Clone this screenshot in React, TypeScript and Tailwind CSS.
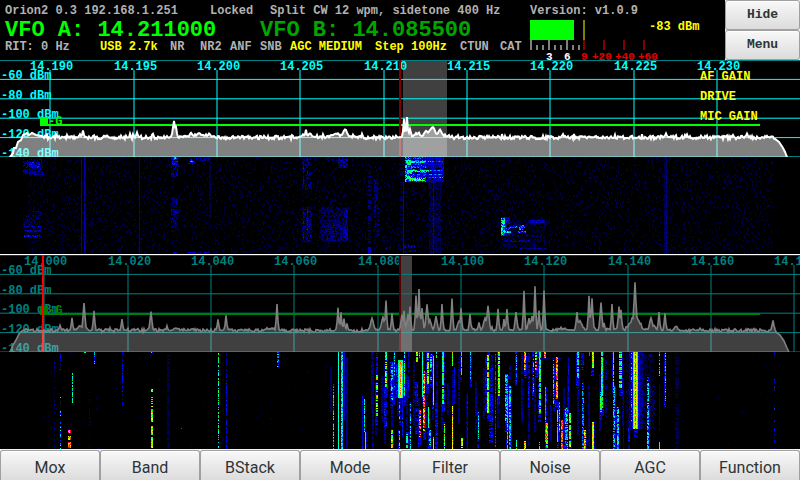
import React from "react";

type Point = [number, number];
/** x, width, top, bottom, weakest level, strongest level, share of rows that carry signal */
type Streak = [number, number, number, number, number, number, number];

const SPAN = 800;
const PLOT = 97;
const MONO = "font-['Liberation_Mono',monospace] font-bold";

function randomFrom(seed: number) {
  let s = seed;
  return () => {
    s = (s * 1664525 + 1013904223) % 4294967296;
    return s / 4294967296;
  };
}

/* ---------- spectrum ---------- */

function tracePoints(seed: number, base: number, left: Point[], right: Point[], peaks: [number, number, number][]) {
  const rnd = randomFrom(seed);
  const start = left[left.length - 1][0] + 1;
  const end = right[0][0];
  const pts: Point[] = [...left];
  for (let x = start; x < end; x += 1) {
    let y = base + (rnd() - 0.5) * 3.6 - (rnd() > 0.94 ? 2 : 0);
    for (const [px, py, w] of peaks) {
      const d = Math.abs(x - px);
      if (d < w * 4) {
        const lift = (base - py) * Math.exp(-Math.pow(d / w, 1.7));
        y = Math.min(y, base - lift + (rnd() - 0.5) * (w > 3 ? 3 : 1));
      }
    }
    pts.push([x, y]);
  }
  return [...pts, ...right];
}

const toPath = (pts: Point[]) => pts.map(([x, y], i) => `${i ? "L" : "M"}${x} ${y.toFixed(1)}`).join("");

const TRACE_1 = tracePoints(
  7, 77.5,
  [[10, 97], [13, 93], [14, 88], [16, 88], [18, 82], [21, 80], [23, 75], [27, 73], [29, 75], [32, 73], [36, 75], [42, 76]],
  [[775, 79], [779, 82], [783, 88], [785, 92], [787, 97]],
  [[80, 74, 1], [83, 70, 1], [174, 61, 1.5], [176, 67, 1], [137, 73, 1], [191, 73, 2], [200, 74, 5], [209, 74, 2], [303, 74, 1.5],
   [306, 70, 1], [310, 73, 2], [336, 74, 5], [345, 69, 3], [404, 59, 1], [407, 57, 1], [410, 69, 1.5], [418, 73, 4], [426, 71, 3],
   [432, 67, 4], [440, 70, 3], [563, 74, 1], [666, 73, 1], [747, 74, 1]],
);

const TRACE_2 = tracePoints(
  21, 75.5,
  [[10, 97], [13, 90], [16, 85], [19, 79], [22, 76], [26, 74]],
  [[776, 77], [780, 80], [784, 86], [787, 93], [789, 97]],
  [[60, 70, 1], [72, 63, 1], [84, 48, 1.3], [94, 56, 1], [80, 71, 3], [122, 64, 1], [151, 57, 1.3], [167, 71, 1], [176, 73, 3],
   [218, 64, 1], [226, 60, 1], [270, 73, 4], [277, 49, 1], [338, 53, 1], [341, 57, 1], [344, 64, 1], [347, 69, 1], [372, 63, 2],
   [383, 62, 2], [386, 45, 1], [392, 58, 1], [402, 60, 1.5], [404, 56, 1], [408, 59, 1.5], [410, 52, 1], [416, 41, 1],
   [419, 34, 1], [422, 53, 1.3], [427, 49, 1.5], [430, 65, 2], [436, 61, 1.5], [442, 49, 1], [452, 44, 1], [459, 66, 2],
   [461, 53, 1], [470, 59, 1], [479, 67, 1], [485, 63, 2], [488, 51, 1.5], [498, 54, 1], [504, 64, 1], [507, 54, 1],
   [516, 57, 1.3], [524, 36, 1], [529, 63, 1.5], [532, 61, 1.5], [535, 31, 1], [539, 56, 1], [544, 36, 1], [562, 73, 4],
   [577, 57, 1.2], [580, 66, 3], [589, 41, 1], [592, 43, 1.2], [601, 48, 1.3], [604, 68, 1], [612, 49, 1], [619, 52, 1.3],
   [621, 55, 1], [635, 27, 1.4], [635, 60, 6], [651, 63, 2], [654, 70, 2], [659, 57, 1], [665, 58, 1], [676, 71, 2],
   [773, 65, 1.2], [700, 73, 1]],
);

/* ---------- waterfall ---------- */

function levelColour(l: number) {
  const c = (a: number, b: number) => Math.round(255 * Math.min(1, Math.max(0, (l - a) / (b - a))));
  if (l < 0.34) return `rgb(0,0,${c(0, 0.34)})`;
  if (l < 0.5) return `rgb(0,${c(0.34, 0.5)},255)`;
  if (l < 0.65) return `rgb(0,255,${255 - c(0.5, 0.65)})`;
  if (l < 0.8) return `rgb(${c(0.65, 0.8)},255,0)`;
  if (l < 0.94) return `rgb(255,${255 - c(0.8, 0.94)},0)`;
  return `rgb(255,0,${c(0.94, 1)})`;
}

function waterfallLayers(seed: number, specks: number, streaks: Streak[]) {
  const rnd = randomFrom(seed);
  const grid = new Map<number, number>();
  const put = (x: number, y: number, level: number) => {
    if (y < 0 || y >= PLOT) return;
    grid.set(y * SPAN + x, level);
  };
  for (let i = 0; i < specks; i += 1) {
    const x = Math.floor(28 + rnd() * 745);
    const y = Math.floor(rnd() * PLOT);
    const level = 0.03 + rnd() * 0.09;
    put(x, y, level);
    put(x, y + 1, level);
  }
  for (const [x, w, top, bottom, low, high, duty] of streaks) {
    for (let y = top; y < bottom; y += 1) {
      const rowOn = w <= 4 ? rnd() < duty : true;
      for (let dx = 0; dx < w; dx += 1) {
        if (rowOn && (w <= 4 || rnd() < duty)) put(x + dx, y, low + rnd() * (high - low));
      }
    }
  }
  const layers = new Map<number, string[]>();
  grid.forEach((level, key) => {
    const step = Math.round(level * 30);
    const x = key % SPAN;
    const y = Math.floor(key / SPAN);
    if (!layers.has(step)) layers.set(step, []);
    layers.get(step)!.push(`M${x} ${y}h1v1h-1z`);
  });
  return [...layers].map(([step, d]) => ({ step, fill: levelColour(step / 30), d: d.join("") }));
}

const speech: Streak[] = [
  [405, 39, 0, 25, 0.14, 0.34, 0.9],
  [406, 20, 0, 25, 0.28, 0.44, 0.6],
  [405, 2, 0, 25, 0.32, 0.56, 0.9],
  ...[4, 13, 17, 20].map((y): Streak => [428, 15, y, y + 1, 0.3, 0.48, 0.9]),
  ...[2, 8, 11, 16].map((y): Streak => [411, 32, y, y + 1, 0.02, 0.1, 0.7]),
  [407, 19, 4, 6, 0.42, 0.66, 0.85],
  [407, 22, 13, 15, 0.42, 0.68, 0.8],
  [407, 5, 13, 17, 0.5, 0.74, 0.7],
  [407, 4, 3, 8, 0.5, 0.7, 0.7],
  [407, 5, 19, 22, 0.5, 0.76, 0.8],
  [409, 16, 21, 24, 0.5, 0.8, 0.7],
];

const WATERFALL_1 = waterfallLayers(3, 6500, [
  [81, 1, 0, 97, 0.18, 0.24, 1], [84, 2, 0, 97, 0.18, 0.24, 0.95], [139, 1, 0, 97, 0.15, 0.22, 1], [209, 2, 0, 60, 0.06, 0.14, 0.7],
  [23, 20, 2, 18, 0.1, 0.28, 0.5], [27, 13, 5, 11, 0.2, 0.38, 0.7], [23, 18, 54, 82, 0.08, 0.2, 0.4],
  [24, 18, 69, 70, 0.2, 0.34, 0.8], [25, 16, 73, 75, 0.2, 0.34, 0.7], [24, 17, 78, 80, 0.2, 0.38, 0.8],
  [171, 7, 0, 20, 0.12, 0.32, 0.5], [172, 6, 0, 8, 0.2, 0.4, 0.7], [174, 2, 0, 2, 0.4, 0.5, 1],
  [171, 7, 40, 75, 0.08, 0.28, 0.4], [188, 7, 2, 7, 0.2, 0.38, 0.6], [190, 3, 4, 5, 0.38, 0.5, 1],
  [196, 14, 1, 4, 0.12, 0.3, 0.6], [188, 22, 95, 97, 0.15, 0.34, 0.8], [173, 4, 94, 97, 0.2, 0.34, 0.8],
  [302, 9, 0, 33, 0.1, 0.26, 0.4], [303, 1, 0, 28, 0.2, 0.36, 0.6], [307, 1, 0, 20, 0.2, 0.36, 0.5],
  [325, 23, 0, 4, 0.08, 0.24, 0.5], [338, 10, 2, 11, 0.14, 0.32, 0.7],
  [302, 10, 50, 85, 0.08, 0.28, 0.45], [303, 1, 52, 82, 0.2, 0.38, 0.6], [307, 1, 50, 80, 0.2, 0.38, 0.6],
  [319, 29, 50, 84, 0.07, 0.19, 0.6], [326, 22, 68, 84, 0.12, 0.26, 0.4], [343, 5, 52, 82, 0.14, 0.32, 0.5],
  [368, 3, 14, 86, 0.08, 0.22, 0.4], [374, 5, 22, 80, 0.08, 0.24, 0.4], [368, 3, 90, 97, 0.2, 0.34, 0.7],
  [385, 6, 90, 93, 0.12, 0.28, 0.5], [400, 4, 0, 97, 0.04, 0.12, 0.6], [403, 1, 25, 97, 0.2, 0.26, 1],
  [429, 12, 25, 97, 0.05, 0.17, 0.7], [433, 1, 25, 97, 0.14, 0.3, 0.9],
  ...speech,
  [404, 12, 88, 91, 0.14, 0.32, 0.7], [404, 12, 93, 95, 0.14, 0.3, 0.6],
  [501, 44, 62, 92, 0.04, 0.14, 0.4], [501, 9, 60, 79, 0.15, 0.4, 0.7], [501, 4, 60, 78, 0.32, 0.6, 0.75],
  [502, 3, 63, 67, 0.5, 0.7, 0.9], [505, 6, 74, 76, 0.38, 0.55, 0.8], [510, 15, 69, 71, 0.28, 0.46, 0.9],
  [519, 5, 68, 73, 0.24, 0.46, 0.8], [518, 8, 74, 76, 0.24, 0.46, 0.8], [529, 16, 63, 66, 0.16, 0.32, 0.8],
  [504, 26, 83, 85, 0.14, 0.3, 0.7], [520, 26, 91, 92, 0.14, 0.3, 0.7], [512, 32, 78, 79, 0.12, 0.28, 0.6],
  [664, 3, 0, 97, 0.05, 0.15, 0.9], [666, 1, 0, 97, 0.12, 0.22, 0.9],
]);

const DIM = [0.08, 0.24] as const;
const BLUE = [0.16, 0.38] as const;
const CYAN = [0.3, 0.56] as const;
const GREEN = [0.45, 0.7] as const;
const YELLOW = [0.56, 0.86] as const;
const RED = [0.76, 1] as const;

const s = (x: number, w: number, top: number, bottom: number, k: readonly [number, number], duty = 0.9): Streak =>
  [x, w, top, bottom, k[0], k[1], duty];

const haze: Streak[] = [371, 375, 381, 384, 391, 397, 406, 413, 418, 426, 432, 436, 441, 447, 452, 458, 466, 475, 483, 491,
  497, 505, 509, 521, 528, 534, 539, 550, 563, 567, 577, 582, 588, 599, 605, 614, 622, 630].map((x, i) =>
  s(x, 2, (i * 37) % 50, 60 + ((i * 23) % 37), DIM, 0.85));

const signals: Streak[] = [
  s(54, 1, 10, 97, DIM, 0.4), s(60, 1, 1, 18, BLUE, 0.5), s(60, 1, 43, 97, CYAN, 0.55), s(72, 1, 21, 51, GREEN, 0.7),
  s(84, 2, 0, 1, GREEN, 1), s(94, 1, 0, 12, CYAN, 0.7), s(68, 3, 78, 81, RED, 1), s(68, 3, 84, 88, RED, 1),
  s(68, 3, 90, 96, RED, 0.9), s(89, 1, 40, 97, DIM, 0.3), s(122, 1, 0, 53, BLUE, 0.7), s(151, 2, 0, 1, CYAN, 1),
  s(151, 2, 37, 55, YELLOW, 0.6), s(151, 2, 57, 70, YELLOW, 0.95), s(151, 2, 74, 83, YELLOW, 0.9), s(151, 2, 85, 96, YELLOW, 1),
  s(167, 3, 3, 97, [0.04, 0.14], 0.8), s(181, 1, 76, 77, CYAN, 1), s(218, 1, 1, 97, GREEN, 0.65), s(226, 1, 1, 97, BLUE, 0.75),
  s(277, 2, 0, 15, CYAN, 0.7), s(330, 2, 15, 60, [0.08, 0.2]), s(333, 1, 32, 97, CYAN, 0.9), s(338, 1, 0, 97, [0.48, 0.58], 1),
  s(341, 2, 0, 97, [0.38, 0.56], 1), s(344, 1, 0, 68, [0.2, 0.28], 1), s(346, 2, 5, 97, [0.14, 0.22], 1),
  s(362, 1, 44, 97, [0.2, 0.36], 1), s(364, 1, 47, 80, [0.4, 0.7], 0.95), s(365, 1, 80, 97, GREEN), s(372, 2, 0, 97, DIM, 0.8),
  s(376, 2, 0, 22, BLUE, 0.7), s(376, 2, 22, 65, YELLOW, 0.65), s(385, 2, 0, 35, [0.4, 0.8], 0.8), s(384, 3, 35, 75, BLUE, 0.7),
  s(391, 2, 10, 48, CYAN, 0.75), s(391, 2, 78, 97, YELLOW, 0.9), s(394, 1, 0, 45, CYAN, 0.7),
  s(393, 16, 24, 46, [0.12, 0.32], 0.9), s(396, 9, 12, 46, [0.22, 0.4], 0.9), s(398, 5, 8, 46, [0.46, 0.62], 1),
  s(399, 3, 14, 46, [0.7, 0.84], 1), s(400, 1, 10, 44, [0.8, 0.92], 1), s(399, 1, 50, 68, CYAN, 0.8), s(399, 1, 78, 97, CYAN, 0.8),
  s(402, 1, 46, 85, [0.2, 0.4]), s(404, 1, 0, 45, GREEN, 0.8), s(408, 1, 0, 40, BLUE, 0.9), s(410, 1, 50, 97, CYAN, 0.8),
  s(406, 2, 80, 97, GREEN, 0.7), s(415, 3, 30, 82, BLUE, 0.75), s(416, 2, 0, 12, YELLOW, 0.7), s(419, 2, 57, 85, RED, 0.75),
  s(419, 1, 0, 6, RED), s(422, 1, 0, 45, [0.46, 0.6], 0.95), s(424, 1, 19, 40, RED), s(423, 2, 22, 80, RED, 0.85),
  s(427, 2, 0, 33, YELLOW, 0.7), s(428, 1, 55, 76, [0.5, 0.64], 1), s(429, 2, 78, 97, CYAN, 0.8), s(430, 2, 2, 28, CYAN, 0.7),
  s(433, 1, 4, 53, [0.82, 0.88], 1), s(433, 1, 85, 97, [0.8, 0.88], 1), s(435, 3, 50, 97, BLUE, 0.8), s(436, 1, 0, 6, GREEN),
  s(442, 2, 0, 52, [0.44, 0.7], 0.9), s(444, 1, 70, 97, YELLOW), s(452, 1, 0, 14, YELLOW), s(452, 1, 54, 97, [0.74, 0.88], 0.95),
  s(454, 1, 15, 52, BLUE), s(461, 1, 0, 23, GREEN), s(461, 2, 86, 97, YELLOW), s(467, 1, 42, 97, BLUE), s(470, 1, 0, 28, CYAN),
  s(478, 1, 60, 88, CYAN, 0.7), s(487, 2, 0, 61, YELLOW, 0.85), s(485, 2, 5, 60, BLUE, 0.8), s(489, 4, 15, 92, BLUE, 0.7),
  s(495, 1, 2, 95, [0.28, 0.42]), s(498, 2, 0, 44, YELLOW, 0.8), s(505, 3, 22, 72, CYAN, 0.8), s(507, 1, 40, 97, [0.4, 0.55]),
  s(509, 2, 34, 97, [0.36, 0.6], 0.8), s(516, 1, 0, 26, CYAN), s(516, 1, 88, 97, GREEN),
  s(524, 2, 0, 19, RED, 0.9), s(524, 2, 89, 97, RED, 1), s(528, 2, 0, 55, BLUE, 0.8), s(533, 1, 0, 40, CYAN, 0.6),
  s(535, 2, 0, 18, [0.6, 1], 0.8), s(539, 2, 0, 62, [0.4, 0.74], 0.85), s(539, 1, 90, 97, GREEN), s(544, 2, 0, 6, RED, 1),
  s(540, 22, 6, 7, [0.16, 0.3], 0.9),
  s(545, 1, 35, 90, [0.86, 0.96], 0.95), s(546, 2, 70, 96, [0.6, 0.95], 0.9), s(553, 1, 8, 52, CYAN, 0.85), s(556, 2, 5, 48, RED, 0.95),
  s(557, 1, 58, 90, GREEN, 0.9), s(559, 1, 50, 80, RED, 0.9), s(561, 2, 68, 97, [0.82, 1], 0.9), s(565, 3, 55, 97, CYAN, 0.7),
  s(568, 1, 5, 62, BLUE, 0.95), s(569, 2, 60, 97, YELLOW, 0.8), s(577, 2, 0, 28, [0.38, 0.7], 0.8), s(581, 3, 0, 18, BLUE, 0.8),
  s(582, 2, 30, 97, [0.24, 0.48], 0.85), s(584, 2, 78, 97, RED, 0.9), s(589, 1, 0, 4, RED), s(589, 1, 32, 97, DIM),
  s(592, 2, 0, 16, YELLOW, 1), s(592, 2, 70, 97, [0.68, 0.86], 1), s(600, 2, 40, 60, GREEN, 0.8),
  s(601, 2, 0, 56, [0.42, 0.66], 0.95), s(613, 1, 0, 34, [0.56, 0.74]), s(613, 2, 34, 97, CYAN, 0.8),
  s(617, 2, 55, 97, [0.36, 0.6], 0.9), s(619, 3, 0, 36, [0.42, 0.76], 0.8), s(623, 1, 30, 97, DIM),
  s(626, 28, 2, 77, [0.03, 0.12], 0.6), s(629, 14, 0, 77, [0.1, 0.26], 0.85), s(631, 1, 0, 70, CYAN, 0.6),
  s(632, 7, 0, 77, [0.24, 0.36], 1), s(633, 5, 0, 77, [0.46, 0.66], 1), s(634, 3, 0, 77, [0.7, 0.84], 1),
  s(635, 1, 0, 77, [0.78, 1], 1), s(628, 2, 68, 97, BLUE, 0.8), s(647, 1, 91, 97, YELLOW), s(647, 2, 25, 97, CYAN, 0.8),
  s(649, 6, 34, 77, DIM, 0.4), s(649, 3, 0, 5, DIM, 0.7),
  s(659, 1, 0, 24, [0.26, 0.6]), s(659, 1, 90, 97, GREEN), s(659, 1, 30, 80, DIM, 0.8), s(665, 1, 0, 49, CYAN, 0.85),
  s(675, 4, 0, 97, [0.03, 0.14], 0.6), s(774, 1, 0, 6, BLUE, 0.8), s(774, 1, 27, 40, BLUE, 0.6), s(774, 1, 53, 58, BLUE, 0.7),
  s(774, 1, 66, 97, BLUE, 0.4),
];

const skirts = signals
  .filter(([x, w, top, bottom, low]) => x > 364 && x < 666 && w < 4 && bottom - top > 14 && low >= 0.3)
  .map(([x, w, top, bottom], i) => s(x - (i % 2), w + 1, top, Math.min(97, bottom + 8), BLUE, 0.75));

const WATERFALL_2 = waterfallLayers(11, 160, [...haze, ...skirts, ...signals]);

/* ---------- receiver panels ---------- */

type ReceiverProps = {
  name: string;
  active: boolean;
  marks: [number, string][];
  passband: [number, number];
  agcY: number;
  trace: Point[];
  waterfall: { step: number; fill: string; d: string }[];
  bandEdge?: number;
  gains?: string[];
};

const pct = (x: number) => `${(x / SPAN) * 100}%`;

function Receiver({ name, active, marks, passband, agcY, trace, waterfall, bandEdge, gains = [] }: ReceiverProps) {
  const ink = active ? "#00ffff" : "#008080";
  const green = active ? "#00ff00" : "#008000";
  const line = toPath(trace);
  const levels = [-60, -80, -100, -120, -140];
  return (
    <section aria-label={name} className="w-full">
      <svg className={`block h-[97px] w-full bg-black text-[12px] ${MONO}`}>
        <svg width="100%" height="97" viewBox="0 0 800 97" preserveAspectRatio="none">
          <rect x={passband[0]} y="0" width={passband[1] - passband[0]} height="97" fill="#404040" />
          <path d="M0 0.5H800" stroke={active ? "#008080" : "#004040"} />
          {marks.map(([x]) => <path key={x} d={`M${x} 10V97`} stroke={active ? "#008080" : "#004040"} strokeWidth="2" />)}
        </svg>
        {marks.map(([x, label]) => (
          <text key={label} x={pct(x - 20)} y="10" fill={ink}>{label}</text>
        ))}
        <svg width="100%" height="97" viewBox="0 0 800 97" preserveAspectRatio="none">
          {levels.map((v, i) => <path key={v} d={`M0 ${(i + 1) * 19.4}H800`} stroke={ink} />)}
        </svg>
        {levels.map((v, i) => <text key={v} x="1" y={Math.round((i + 1) * 19.4)} fill={ink}>{v} dBm</text>)}
        <text x={pct(48)} y={agcY} fill={green}>-G</text>
        <svg width="100%" height="97" viewBox="0 0 800 97" preserveAspectRatio="none">
          <rect x="40" y={agcY - 8} width="8" height="9" fill={green} />
          <path d={`M40 ${agcY}H760`} stroke={green} strokeWidth="2" />
          <path d="M400 0V97" stroke={active ? "#800000" : "#500000"} strokeWidth="2" />
          {bandEdge !== undefined && <path d={`M${bandEdge} 0V97`} stroke="#ff0000" strokeWidth="2" />}
          <path d={`${line}Z`} fill="#ffffff" fillOpacity={active ? 0.5 : 0.25} />
          <path d={line} fill="none" stroke={active ? "#ffffff" : "#808080"} strokeWidth={active ? 2 : 1.6} />
        </svg>
        {gains.map((g, i) => <text key={g} x="87.5%" y={20 + i * 20} fill="#ffff00">{g}</text>)}
      </svg>
      <svg className="block h-[97px] w-full bg-black" viewBox="0 0 800 97" preserveAspectRatio="none" shapeRendering="crispEdges">
        {waterfall.map((l) => <path key={l.step} d={l.d} fill={l.fill} />)}
      </svg>
    </section>
  );
}

const MARKS_1: [number, string][] = [[50, "14.190"], [134, "14.195"], [217, "14.200"], [300, "14.205"], [384, "14.210"],
  [467, "14.215"], [550, "14.220"], [634, "14.225"], [717, "14.230"]];
const MARKS_2: [number, string][] = [[44, "14.000"], [128, "14.020"], [211, "14.040"], [294, "14.060"], [378, "14.080"],
  [461, "14.100"], [544, "14.120"], [628, "14.140"], [711, "14.160"], [794, "14.180"]];

/* ---------- header ---------- */

function Meter() {
  const ticks = Array.from({ length: 9 }, (_, i) => i);
  return (
    <svg className={`block h-[42px] w-[190px] overflow-visible text-[12px] ${MONO}`} role="img" aria-label="Signal level -83 dBm">
      <rect x="0" y="2" width="44" height="20" fill="#00ff00" />
      <rect x="53" y="2" width="2" height="20" fill="#808000" />
      {ticks.map((i) => (
        <rect key={i} x={i * 6} y={i % 3 ? 27 : 22} width="2" height={i % 3 ? 5 : 10} fill="#808080" />
      ))}
      {[53, 73, 93, 113].map((x) => <rect key={x} x={x} y="22" width="2" height="10" fill="#800000" />)}
      <text x="119" y="12" fill="#ffff00">-83 dBm</text>
      <g className="text-[11px]">
        <text x="16" y="42" fill="#ffffff">3</text>
        <text x="34" y="42" fill="#ffffff">6</text>
        <g fill="#e60000">
          <text x="51" y="42">9</text>
          <text x="62" y="42">+20</text>
          <text x="85" y="42">+40</text>
          <text x="108" y="42">+60</text>
        </g>
      </g>
    </svg>
  );
}

const KEY = "border border-[#a0a0a0] bg-linear-to-b from-[#f8f8f8] to-[#dcdcdc] text-[#2e3436] inset-shadow-[0_1px_0_#ffffff]";

export default function App() {
  return (
    <main className="w-full overflow-hidden bg-black">
      <header className={`flex h-[60px] justify-between whitespace-pre text-[12px] text-[#b2b2b2] ${MONO}`}>
        <div className="flex shrink-0 flex-col pl-[5px]">
          <div className="flex h-[22px] items-center leading-[22px]">
            <span className="w-[205px]">Orion2 0.3 192.168.1.251</span>
            <span className="w-[60px]">Locked</span>
            <span>Split CW 12 wpm, sidetone 400 Hz</span>
          </div>
          <div className="flex h-[18px] items-center text-[22px] leading-[22px]">
            <span className="w-[255px] text-[#00ff00]">VFO A: 14.211000</span>
            <span className="text-[#00a600]">VFO B: 14.085500</span>
          </div>
          <div className="flex h-[14px] items-center leading-[14px]">
            <span className="w-[95px]">RIT: 0 Hz</span>
            <span className="w-[70px] text-[#ffff00]">USB 2.7k</span>
            <span className="w-[30px]">NR</span>
            <span className="w-[30px]">NR2</span>
            <span className="w-[30px]">ANF</span>
            <span className="w-[30px]">SNB</span>
            <span className="w-[85px] text-[#ffff00]">AGC MEDIUM</span>
            <span className="w-[85px] text-[#ffff00]">Step 100Hz</span>
            <span className="w-[40px]">CTUN</span>
            <span className="w-[30px]">CAT</span>
          </div>
        </div>
        <div className="flex shrink-0">
          <div className="w-[195px]">
            <p className="h-[18px] pt-[2px] leading-[18px]">Version: v1.0.9</p>
            <Meter />
          </div>
          <div className="flex w-[75px] flex-col bg-[#e8e8e8] text-[13px]">
            <button type="button" className={`h-[30px] rounded-[3px] ${KEY}`}>Hide</button>
            <button type="button" className={`h-[30px] rounded-[3px] ${KEY}`}>Menu</button>
          </div>
        </div>
      </header>

      <Receiver name="Receiver 1" active marks={MARKS_1} passband={[403, 447]} agcY={65} trace={TRACE_1}
        waterfall={WATERFALL_1} gains={["AF GAIN", "DRIVE", "MIC GAIN"]} />
      <div className="h-px w-full bg-white" />
      <Receiver name="Receiver 2" active={false} marks={MARKS_2} passband={[401, 412]} agcY={59} trace={TRACE_2}
        waterfall={WATERFALL_2} bandEdge={43} />

      <nav className="flex bg-[#f4f4f4] pt-px font-[Roboto,sans-serif] text-[16px]">
        {["Mox", "Band", "BStack", "Mode", "Filter", "Noise", "AGC", "Function"].map((label) => (
          <button key={label} type="button" className={`h-[30px] flex-1 rounded-t-[3px] border-b-0 pt-[4px] ${KEY}`}>{label}</button>
        ))}
      </nav>
    </main>
  );
}
